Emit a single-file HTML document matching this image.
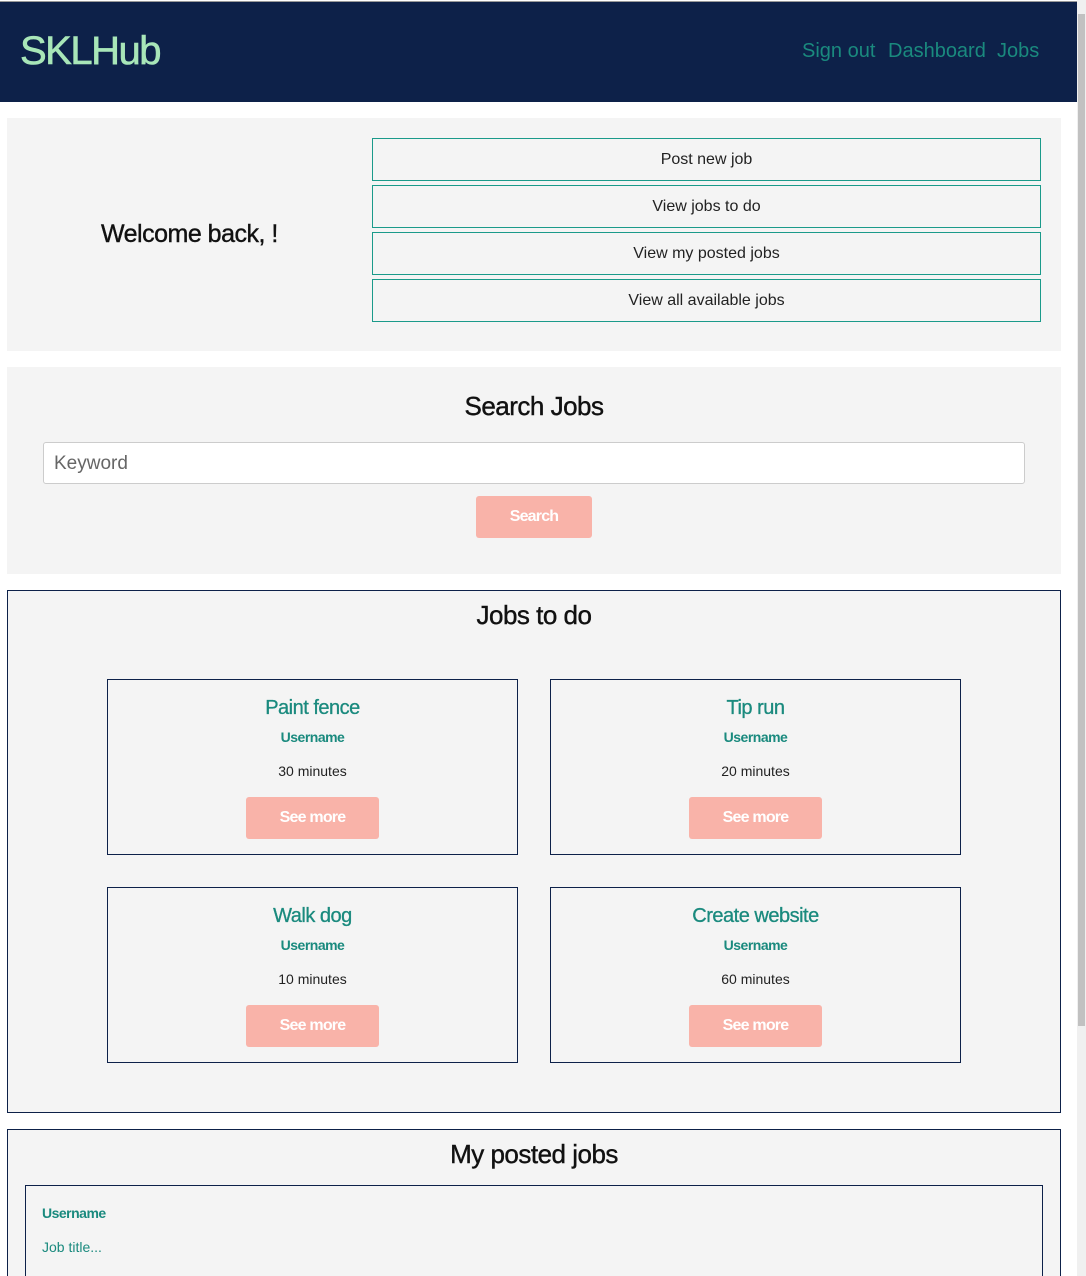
<!DOCTYPE html>
<html><head><style>
*{box-sizing:border-box;margin:0;padding:0}
html,body{width:1086px;height:1276px;overflow:hidden}
body{background:#fff;font-family:"Liberation Sans",sans-serif;position:relative}
.abs{position:absolute}
.hdr{left:0;top:1px;width:1077px;height:101px;background:#0d2149;border-top:1px solid #999}
.logo{left:20px;top:29px;font-size:40px;color:#a8e6b8;letter-spacing:-1.5px;-webkit-text-stroke:0.6px #a8e6b8}
.nav{top:40px;font-size:20px;color:#1a8a7e}
.sec{background:#f4f4f4;left:7px;width:1054px}
.btn{left:372px;width:669px;height:43px;border:1px solid #1a9a8a;text-align:center;line-height:41px;font-size:16px;color:#222;background:#f4f4f4}
.card{width:411px;height:176px;border:1px solid #0d2149;background:#f4f4f4;text-align:center}
.card h3{font-size:20px;font-weight:normal;color:#1a8a7e;margin-top:17px;letter-spacing:-0.5px;-webkit-text-stroke:0.3px #1a8a7e}
.card .u{font-size:14px;font-weight:bold;color:#1a8a7e;margin-top:9px;letter-spacing:-0.5px}
.card .m{font-size:14px;color:#222;margin-top:18px}
.card .s{width:133px;height:42px;margin:18px auto 0;background:#f9b3a9;border-radius:3px;color:#fff;font-weight:bold;font-size:16px;line-height:42px;letter-spacing:-0.8px}
.t{-webkit-text-stroke:0.4px #111}
</style></head><body>
<div class="abs hdr"></div>
<div class="abs logo">SKLHub</div>
<div class="abs nav" style="left:802px">Sign out</div>
<div class="abs nav" style="left:888px">Dashboard</div>
<div class="abs nav" style="left:997px">Jobs</div>
<div class="abs" style="left:1077px;top:0;width:9px;height:1276px;background:#f0f0f0"></div>
<div class="abs" style="left:1078px;top:14px;width:7px;height:1012px;background:#c1c1c1"></div>

<div class="abs sec" style="top:118px;height:233px"></div>
<div class="abs t" style="left:101px;top:220px;font-size:25px;color:#111;letter-spacing:-0.5px">Welcome back, !</div>
<div class="abs btn" style="top:138px">Post new job</div>
<div class="abs btn" style="top:185px">View jobs to do</div>
<div class="abs btn" style="top:232px">View my posted jobs</div>
<div class="abs btn" style="top:279px">View all available jobs</div>

<div class="abs sec" style="top:367px;height:207px"></div>
<div class="abs t" style="left:0;width:1068px;top:391px;text-align:center;font-size:26px;color:#111;letter-spacing:-0.5px">Search Jobs</div>
<div class="abs" style="left:43px;top:442px;width:982px;height:42px;background:#fff;border:1px solid #ccc;border-radius:3px;font-size:19px;color:#666;padding:10px 10px">Keyword</div>
<div class="abs" style="left:476px;top:496px;width:116px;height:42px;background:#f9b3a9;border-radius:3px;color:#fff;font-weight:bold;font-size:16px;line-height:42px;text-align:center;letter-spacing:-0.8px">Search</div>

<div class="abs sec" style="top:590px;height:523px;border:1px solid #0d2149"></div>
<div class="abs t" style="left:0;width:1068px;top:600px;text-align:center;font-size:26px;color:#111;letter-spacing:-0.5px">Jobs to do</div>
<div class="abs card" style="left:107px;top:679px"><h3>Paint fence</h3><div class="u">Username</div><div class="m">30 minutes</div><div class="s">See more</div></div>
<div class="abs card" style="left:550px;top:679px"><h3>Tip run</h3><div class="u">Username</div><div class="m">20 minutes</div><div class="s">See more</div></div>
<div class="abs card" style="left:107px;top:887px"><h3>Walk dog</h3><div class="u">Username</div><div class="m">10 minutes</div><div class="s">See more</div></div>
<div class="abs card" style="left:550px;top:887px"><h3>Create website</h3><div class="u">Username</div><div class="m">60 minutes</div><div class="s">See more</div></div>

<div class="abs sec" style="top:1129px;height:160px;border:1px solid #0d2149"></div>
<div class="abs t" style="left:0;width:1068px;top:1139px;text-align:center;font-size:26px;color:#111;letter-spacing:-0.5px">My posted jobs</div>
<div class="abs" style="left:25px;top:1185px;width:1018px;height:110px;border:1px solid #0d2149"></div>
<div class="abs" style="left:42px;top:1205px;font-size:14px;font-weight:bold;color:#1a8a7e;letter-spacing:-0.5px">Username</div>
<div class="abs" style="left:42px;top:1239px;font-size:14px;color:#1a8a7e">Job title...</div>
</body></html>
